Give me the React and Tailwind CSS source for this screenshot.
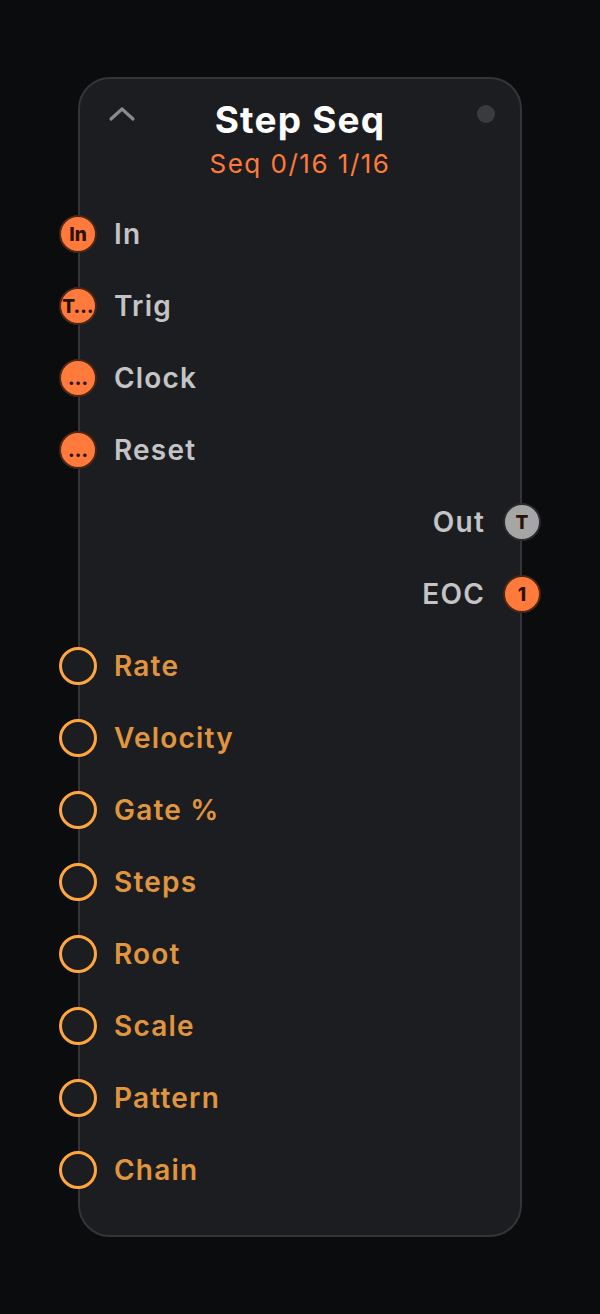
import React from 'react';

const INPUTS = [
  { label: 'In', badge: 'In' },
  { label: 'Trig', badge: 'T…' },
  { label: 'Clock', badge: '…' },
  { label: 'Reset', badge: '…' },
];

const OUTPUTS = [
  { label: 'Out', badge: 'T', gray: true },
  { label: 'EOC', badge: '1' },
];

const PARAMS = ['Rate', 'Velocity', 'Gate %', 'Steps', 'Root', 'Scale', 'Pattern', 'Chain'];

function Port({ badge, gray }) {
  return (
    <div
      className={`w-[38px] h-[38px] rounded-full border-2 flex items-center justify-center overflow-hidden shrink-0 ${
        gray ? 'bg-[#a6a6a6] border-[#2a2a2c]' : 'bg-[#ff7a3b] border-[#4a2616]'
      }`}
    >
      <span className="text-[19px] font-extrabold leading-none text-[#2a1208] whitespace-nowrap">{badge}</span>
    </div>
  );
}

export default function App() {
  return (
    <div className="min-h-screen bg-[#0b0c0e] flex justify-center pt-[77px]" style={{ fontFamily: 'Inter, "Noto Sans", sans-serif' }}>
      <div className="w-[444px] h-[1160px] rounded-[32px] border-2 border-[#353538] bg-[#1c1d20] flex flex-col">
        {/* Header */}
        <div className="relative h-[119px] flex flex-col items-center pt-[17px]">
          <svg className="absolute left-[28px] top-[26px]" width="28" height="18" viewBox="0 0 28 18" fill="none">
            <path d="M3 14 L14 4 L25 14" stroke="#8a8a8c" strokeWidth="3.2" strokeLinecap="round" strokeLinejoin="round" />
          </svg>
          <div className="absolute right-[25px] top-[26px] w-[18px] h-[18px] rounded-full bg-[#3a3b3f]" />
          <h1 className="text-[37px] font-bold text-white leading-[48px] tracking-[1.2px]">Step Seq</h1>
          <p className="text-[26px] text-[#ff7a3b] leading-[32px] mt-[4px] tracking-[1.5px]">Seq 0/16 1/16</p>
        </div>

        {INPUTS.map((p) => (
          <div key={p.label} className="h-[72px] flex items-center gap-[17px] -ml-[21px]">
            <Port badge={p.badge} />
            <span className="text-[28px] font-semibold text-[#c4c4c6] tracking-[1.2px]">{p.label}</span>
          </div>
        ))}

        {OUTPUTS.map((p) => (
          <div key={p.label} className="h-[72px] flex items-center justify-end gap-[18px] -mr-[21px]">
            <span className="text-[28px] font-semibold text-[#c4c4c6] tracking-[1.2px]">{p.label}</span>
            <Port badge={p.badge} gray={p.gray} />
          </div>
        ))}

        {PARAMS.map((label) => (
          <div key={label} className="h-[72px] flex items-center gap-[17px] -ml-[21px]">
            <div className="w-[38px] h-[38px] rounded-full border-[3.5px] border-[#ffa640] bg-[#1c1d20] shrink-0" />
            <span className="text-[28px] font-semibold text-[#e0953f] tracking-[1.2px]">{label}</span>
          </div>
        ))}
      </div>
    </div>
  );
}
